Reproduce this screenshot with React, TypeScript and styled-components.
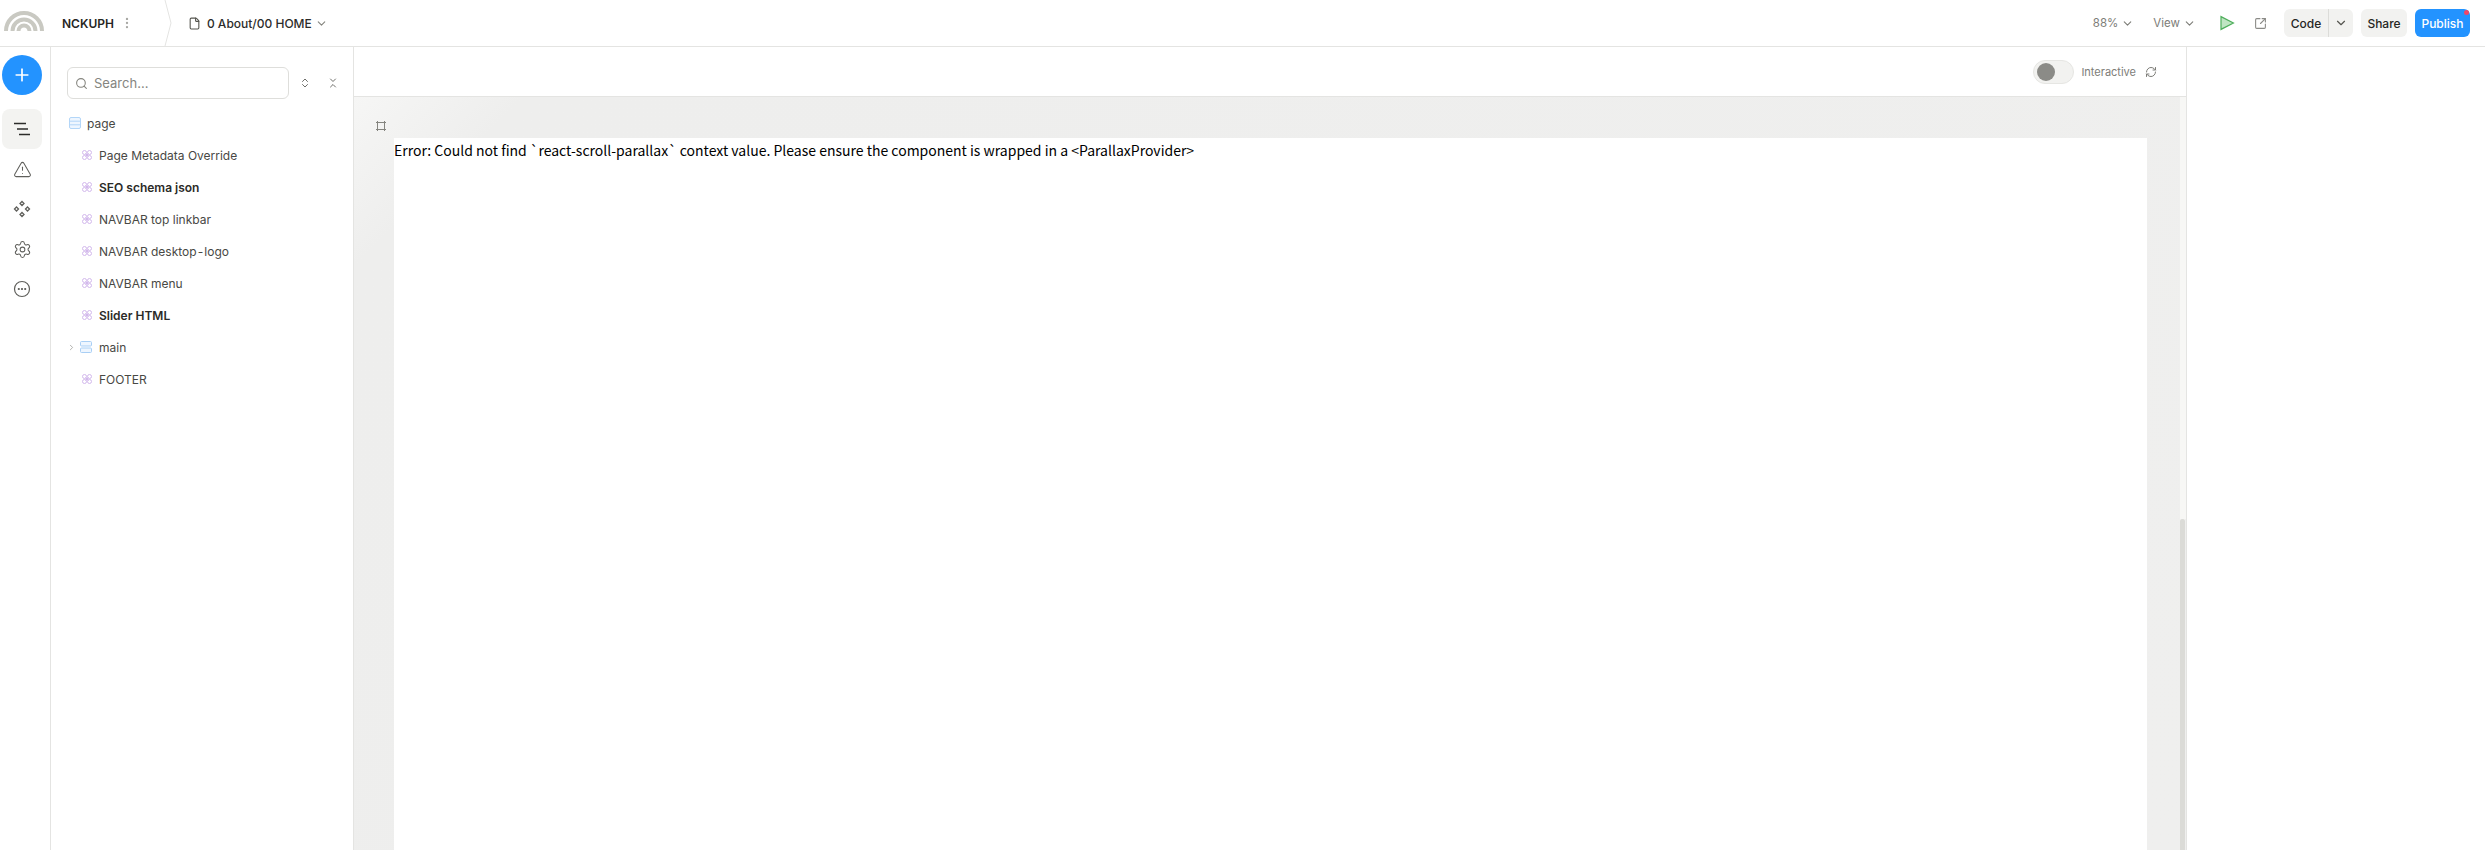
import { FC } from "react";
import styled, { createGlobalStyle } from "styled-components";
import {
  ChevronDown,
  ChevronRight,
  ChevronsDownUp,
  ChevronsUpDown,
  EllipsisVertical,
  File,
  Plus,
  RefreshCw,
  Search,
  Settings,
  SquareArrowOutUpRight,
  TriangleAlert,
} from "lucide-react";

const GlobalStyle = createGlobalStyle`
  html, body {
    margin: 0;
    padding: 0;
    height: 100%;
    overflow: hidden;
    background: #fff;
  }
  #root {
    height: 100%;
  }
`;

const Page = styled.div`
  display: flex;
  flex-direction: column;
  height: 850px;
  font-family: Inter, "Liberation Sans", sans-serif;
  color: #2c2c2a;
`;

const Header = styled.header`
  flex: none;
  display: flex;
  align-items: center;
  height: 46px;
  border-bottom: 1px solid #e4e4e2;
  padding-right: 15px;
`;

const Logo = styled.svg`
  margin: 0 0 5px 4px;
  width: 40px;
  height: 21px;
  flex: none;
`;

const ProjectName = styled.span`
  margin-left: 18px;
  font-size: 12px;
  font-weight: 600;
  color: #26261f;
`;

const Kebab = styled.span`
  display: flex;
  margin-left: 6px;
  color: #a8a8a4;
`;

const Crumb = styled.svg`
  margin-left: 29px;
  width: 10px;
  height: 46px;
  flex: none;
`;

const PagePicker = styled.div`
  display: flex;
  align-items: center;
  margin-left: 15px;
  font-size: 12px;
  font-weight: 500;
  color: #2c2c2a;
  gap: 6px;
`;

const PickerCaret = styled.span`
  display: flex;
  margin-left: -3px;
  color: #85857f;
`;

const HeaderRight = styled.div`
  display: flex;
  align-items: center;
  margin-left: auto;
`;

const GhostMenu = styled.div<{ $gap: number }>`
  display: flex;
  align-items: center;
  gap: 3px;
  margin-right: ${(p) => p.$gap}px;
  font-size: 11.5px;
  color: #7d7d78;
`;

const IconSlot = styled.span<{ $gap: number; $color?: string }>`
  display: flex;
  margin-right: ${(p) => p.$gap}px;
  color: ${(p) => p.$color || "#8a8a86"};
`;

const CodeGroup = styled.div`
  display: flex;
  align-items: center;
  height: 28px;
  width: 69px;
  margin-right: 8px;
  border-radius: 6px;
  background: #f2f2f0;
  font-size: 12px;
  font-weight: 500;
  color: #26261f;
`;

const CodeLabel = styled.span`
  display: flex;
  align-items: center;
  justify-content: center;
  width: 44px;
  height: 100%;
  border-right: 1px solid #dcdcd9;
`;

const CodeCaret = styled.span`
  flex: 1;
  display: flex;
  justify-content: center;
  color: #55554f;
`;

const ShareButton = styled.button`
  width: 46px;
  height: 28px;
  margin-right: 8px;
  padding: 0;
  border: 0;
  border-radius: 6px;
  background: #f2f2f0;
  font: 500 12px Inter, sans-serif;
  color: #26261f;
`;

const PublishButton = styled.button`
  position: relative;
  width: 55px;
  height: 28px;
  padding: 0;
  border: 0;
  border-radius: 6px;
  background: #2393ff;
  font: 500 12px Inter, sans-serif;
  color: #fff;
`;

const Dot = styled.span`
  position: absolute;
  top: 1px;
  right: 1px;
  width: 5px;
  height: 5px;
  border-radius: 50%;
  background: #f0476a;
`;

const Body = styled.div`
  flex: 1;
  min-height: 0;
  display: flex;
`;

const Rail = styled.nav`
  flex: none;
  width: 50px;
  box-sizing: content-box;
  border-right: 1px solid #e4e4e2;
  padding-top: 8px;
  display: flex;
  flex-direction: column;
  align-items: flex-start;
`;

const AddButton = styled.button`
  display: flex;
  align-items: center;
  justify-content: center;
  width: 40px;
  height: 40px;
  margin: 0 0 14px 2px;
  padding: 0;
  border: 0;
  border-radius: 50%;
  background: #2393ff;
  color: #fff;
`;

const RailItem = styled.div<{ $active?: boolean }>`
  display: flex;
  align-items: center;
  justify-content: center;
  width: 40px;
  height: 40px;
  margin-left: 2px;
  border-radius: 8px;
  background: ${(p) => (p.$active ? "#f3f3f1" : "transparent")};
  color: #5f5f5b;
`;

const TreePanel = styled.aside`
  flex: none;
  width: 303px;
  border-right: 1px solid #e4e4e2;
  padding: 20px 0 0 16px;
  box-sizing: border-box;
  display: flex;
  flex-direction: column;
`;

const SearchRow = styled.div`
  display: flex;
  align-items: center;
  margin-bottom: 8px;
`;

const SearchBox = styled.div`
  display: flex;
  align-items: center;
  gap: 6px;
  box-sizing: border-box;
  width: 222px;
  height: 32px;
  padding-left: 7px;
  border: 1px solid #dededb;
  border-radius: 6px;
  font-size: 13px;
  color: #85857f;
`;

const SearchTool = styled.span<{ $left: number }>`
  display: flex;
  margin-left: ${(p) => p.$left}px;
  color: #6f6f6b;
`;

const Row = styled.div<{ $depth: number; $bold?: boolean }>`
  display: flex;
  align-items: center;
  height: 32px;
  padding-left: ${(p) => (p.$depth === 0 ? 2 : 15)}px;
  font-size: 12px;
  font-weight: ${(p) => (p.$bold ? 600 : 400)};
  color: ${(p) => (p.$bold ? "#2b2b28" : "#484844")};
`;

const RowIcon = styled.svg<{ $right: number }>`
  flex: none;
  margin-right: ${(p) => p.$right}px;
`;

const RowCaret = styled.span`
  display: flex;
  width: 13px;
  margin-left: -2px;
  color: #9a9a96;
`;

const Canvas = styled.main`
  position: relative;
  flex: none;
  width: 1833px;
  border-right: 1px solid #e4e4e2;
  box-sizing: border-box;
  display: flex;
  flex-direction: column;
  overflow: hidden;
`;

const CanvasBar = styled.div`
  flex: none;
  display: flex;
  align-items: center;
  justify-content: flex-end;
  height: 49px;
  padding-right: 29px;
  box-sizing: content-box;
  border-bottom: 1px solid #e4e4e2;
  font-size: 11px;
  color: #7d7d78;
`;

const Toggle = styled.span`
  box-sizing: border-box;
  display: flex;
  align-items: center;
  width: 41px;
  height: 24px;
  margin-right: 7px;
  padding-left: 3px;
  border: 1px solid #e6e6e3;
  border-radius: 12px;
  background: #f2f2f0;
`;

const Knob = styled.span`
  width: 18px;
  height: 18px;
  border-radius: 50%;
  background: #8b8b87;
`;

const SyncIcon = styled.span`
  display: flex;
  margin-left: 9px;
  color: #7d7d78;
`;

const Stage = styled.div`
  flex: 1;
  min-height: 0;
  display: flex;
  flex-direction: column;
  background: linear-gradient(135deg, #f6f6f5 0, #eeeeed 120px, #efefee 100%);
`;

const FrameHandle = styled.div`
  flex: none;
  display: flex;
  align-items: flex-end;
  height: 41px;
  padding: 0 0 7px 22px;
  box-sizing: border-box;
  color: #85857f;
`;

const Frame = styled.div`
  flex: 1;
  margin: 0 39px 0 40px;
  background: #fff;
  font-family: "Noto Sans CJK KR", "Noto Sans", sans-serif;
  font-size: 14px;
  line-height: 24px;
  color: #000;
`;

const ScrollTrack = styled.div`
  position: absolute;
  top: 50px;
  right: 0;
  bottom: 0;
  width: 6px;
  background: #f7f7f5;
`;

const ScrollThumb = styled.div`
  position: absolute;
  top: 422px;
  left: 0;
  bottom: 0;
  width: 5px;
  border-radius: 2px 2px 0 0;
  background: #dbdbd7;
`;

const ScrollFloor = styled.div`
  position: absolute;
  top: 422px;
  right: 0;
  bottom: 0;
  width: 1px;
  background: #efefee;
`;

const Inspector = styled.aside`
  flex: 1;
  background: #fff;
`;

const ComponentIcon: FC = () => (
  <RowIcon $right={7} width="10" height="10" viewBox="0 0 10 10" fill="none" stroke="#d3b9ec" strokeWidth="1">
    <circle cx="2.500" cy="2.500" r="2" />
    <circle cx="7.500" cy="2.500" r="2" />
    <circle cx="2.500" cy="7.500" r="2" />
    <circle cx="7.500" cy="7.500" r="2" />
    <path d="M3.500 3.500l3 3M6.500 3.500l-3 3" />
  </RowIcon>
);

const tree = [
  { label: "Page Metadata Override" },
  { label: "SEO schema json", bold: true },
  { label: "NAVBAR top linkbar" },
  { label: "NAVBAR desktop\u200A-\u200Alogo" },
  { label: "NAVBAR menu" },
  { label: "Slider HTML", bold: true },
];

const App: FC = () => {
  return (
    <Page>
      <GlobalStyle />
      <Header>
        <Logo viewBox="0 0 40 21" fill="none" stroke="#c9c9c2" strokeWidth="4">
          <path d="M2 21a18 18 0 0 1 36 0" />
          <path d="M8.500 21a11.500 11.500 0 0 1 23 0" />
          <path d="M14.500 21a5.500 5.500 0 0 1 11 0" />
        </Logo>
        <ProjectName>NCKUPH</ProjectName>
        <Kebab>
          <EllipsisVertical size={14} />
        </Kebab>
        <Crumb viewBox="0 0 10 46" fill="none" stroke="#e4e4e2">
          <path d="M2 0l6 23-6 23" />
        </Crumb>
        <PagePicker>
          <File size={13} color="#55554f" />
          <span>0 About/00 HOME</span>
          <PickerCaret>
            <ChevronDown size={13} />
          </PickerCaret>
        </PagePicker>
        <HeaderRight>
          <GhostMenu $gap={19}>
            88%
            <ChevronDown size={13} />
          </GhostMenu>
          <GhostMenu $gap={23}>
            View
            <ChevronDown size={13} />
          </GhostMenu>
          <IconSlot $gap={19} $color="#4fae5c">
            <svg width="16" height="16" viewBox="0 0 16 16" fill="#bfe5c3" stroke="currentColor" strokeWidth="1.2">
              <path d="M2 1.600 14.400 8 2 14.400z" />
            </svg>
          </IconSlot>
          <IconSlot $gap={17}>
            <SquareArrowOutUpRight size={13} />
          </IconSlot>
          <CodeGroup>
            <CodeLabel>Code</CodeLabel>
            <CodeCaret>
              <ChevronDown size={14} />
            </CodeCaret>
          </CodeGroup>
          <ShareButton>Share</ShareButton>
          <PublishButton>
            Publish
            <Dot />
          </PublishButton>
        </HeaderRight>
      </Header>
      <Body>
        <Rail>
          <AddButton>
            <Plus size={20} strokeWidth={2} />
          </AddButton>
          <RailItem $active>
            <svg width="18" height="16" viewBox="0 0 18 16" fill="none" stroke="#2c2c2a" strokeWidth="1.4">
              <path d="M1 2.500h12M4 8h11M6 13.500h11" />
            </svg>
          </RailItem>
          <RailItem>
            <TriangleAlert size={19} strokeWidth={1.3} />
          </RailItem>
          <RailItem>
            <svg width="18" height="18" viewBox="0 0 18 18" fill="none" stroke="currentColor" strokeWidth="1.3">
              <path d="M9 1.500 11 3.500 9 5.500 7 3.500zM3.500 7 5.500 9 3.500 11 1.500 9zM14.500 7 16.500 9 14.500 11 12.500 9zM9 12.500 11 14.500 9 16.500 7 14.500z" />
            </svg>
          </RailItem>
          <RailItem>
            <Settings size={19} strokeWidth={1.3} />
          </RailItem>
          <RailItem>
            <svg width="18" height="18" viewBox="0 0 18 18" fill="none" stroke="currentColor" strokeWidth="1.2">
              <circle cx="9" cy="9" r="7.500" />
              <circle cx="5.800" cy="9" r="0.500" fill="currentColor" />
              <circle cx="9" cy="9" r="0.500" fill="currentColor" />
              <circle cx="12.200" cy="9" r="0.500" fill="currentColor" />
            </svg>
          </RailItem>
        </Rail>
        <TreePanel>
          <SearchRow>
            <SearchBox>
              <Search size={13} />
              Search...
            </SearchBox>
            <SearchTool $left={10}>
              <ChevronsUpDown size={12} />
            </SearchTool>
            <SearchTool $left={16}>
              <ChevronsDownUp size={12} />
            </SearchTool>
          </SearchRow>
          <Row $depth={0}>
            <RowIcon $right={6} width="12" height="12" viewBox="0 0 12 12" fill="#eef6ff" stroke="#b3d6f8" strokeWidth="1">
              <rect x="0.500" y="0.500" width="11" height="11" rx="1.500" />
              <path d="M1 4.200h10M1 7.800h10" />
            </RowIcon>
            page
          </Row>
          {tree.map((item) => (
            <Row key={item.label} $depth={1} $bold={item.bold}>
              <ComponentIcon />
              {item.label}
            </Row>
          ))}
          <Row $depth={0}>
            <RowCaret>
              <ChevronRight size={9} />
            </RowCaret>
            <RowIcon $right={7} width="12" height="12" viewBox="0 0 12 12" fill="#eef6ff" stroke="#a9cff5" strokeWidth="1">
              <rect x="0.500" y="0.500" width="11" height="4.500" rx="1" />
              <rect x="0.500" y="7" width="11" height="4.500" rx="1" />
            </RowIcon>
            main
          </Row>
          <Row $depth={1}>
            <ComponentIcon />
            FOOTER
          </Row>
        </TreePanel>
        <Canvas>
          <CanvasBar>
            <Toggle>
              <Knob />
            </Toggle>
            Interactive
            <SyncIcon>
              <RefreshCw size={12} />
            </SyncIcon>
          </CanvasBar>
          <Stage>
            <FrameHandle>
              <svg width="10" height="10" viewBox="0 0 10 10" fill="none" stroke="currentColor" strokeWidth="1">
                <path d="M0 1.500h10M0 8.500h10M1.500 0v10M8.500 0v10" />
              </svg>
            </FrameHandle>
            <Frame>Error: Could not find `react-scroll-parallax` context value. Please ensure the component is wrapped in a &lt;ParallaxProvider&gt;</Frame>
          </Stage>
          <ScrollTrack>
            <ScrollThumb />
            <ScrollFloor />
          </ScrollTrack>
        </Canvas>
        <Inspector />
      </Body>
    </Page>
  );
};

export default App;
